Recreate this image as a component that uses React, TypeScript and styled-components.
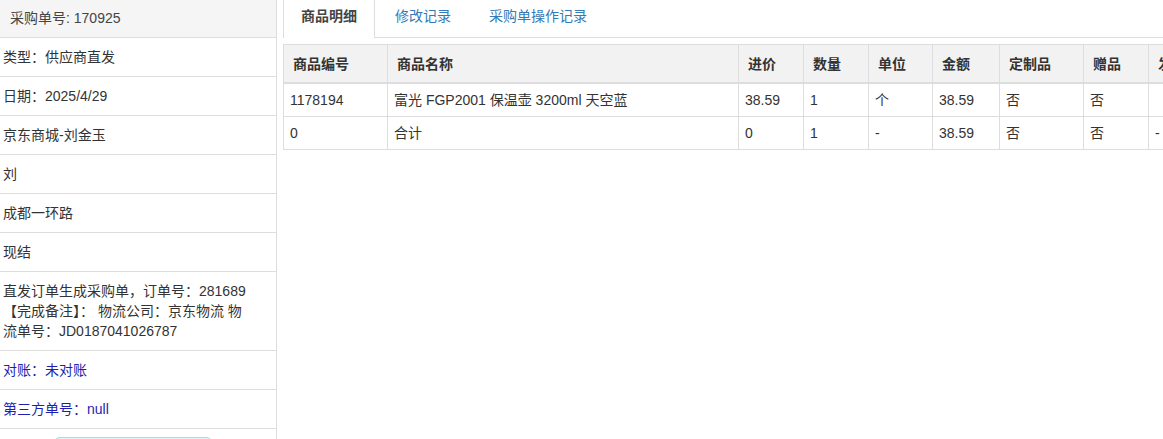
import React from 'react';
import styled, { createGlobalStyle } from 'styled-components';

const GlobalStyle = createGlobalStyle`
  html, body {
    margin: 0;
    padding: 0;
    background: #fff;
    overflow: hidden;
  }
  body {
    font-family: "Liberation Sans", "Noto Sans CJK SC", sans-serif;
    font-size: 14px;
    color: #333;
  }
`;

const Page = styled.div`
  display: flex;
  width: 1163px;
  height: 439px;
  overflow: hidden;
`;

const Side = styled.div`
  width: 276px;
  flex-shrink: 0;
  border-right: 1px solid #ddd;
  display: flex;
  flex-direction: column;
`;

const SideHead = styled.div`
  background: #f5f5f5;
  border-bottom: 1px solid #ddd;
  padding: 8px 10px 9px;
  line-height: 20px;
  color: #444;
`;

const SideRow = styled.div<{ $blue?: boolean }>`
  padding: 9px 28px 9px 3px;
  line-height: 20px;
  border-bottom: 1px solid #ddd;
  color: ${(p) => (p.$blue ? '#1f1fae' : '#333')};
`;

const SideFoot = styled.div`
  display: flex;
  justify-content: center;
  padding-top: 8px;
`;

const CyanButton = styled.button`
  width: 156px;
  height: 30px;
  margin-right: 10px;
  border: 1px solid #a9dfe4;
  border-radius: 4px;
  background: #dff4f6;
`;

const Main = styled.div`
  flex: 1;
  min-width: 0;
  padding-left: 6px;
  overflow: hidden;
`;

const Tabs = styled.div`
  display: flex;
  border-bottom: 1px solid #ddd;
  height: 37px;
`;

const Tab = styled.div<{ $active?: boolean }>`
  padding: 0 17px;
  margin-right: 2px;
  height: ${(p) => (p.$active ? '38px' : '37px')};
  line-height: 33px;
  border: 1px solid ${(p) => (p.$active ? '#ddd' : 'transparent')};
  border-top: none;
  border-bottom: none;
  background: #fff;
  color: ${(p) => (p.$active ? '#444' : '#337ab7')};
  font-weight: ${(p) => (p.$active ? 'bold' : 'normal')};
  white-space: nowrap;
`;

const Table = styled.table<{ $width: number }>`
  margin-top: 6px;
  border-collapse: collapse;
  table-layout: fixed;
  width: ${(p) => p.$width}px;
`;

const Th = styled.th`
  background: #f2f2f2;
  border: 1px solid #ddd;
  border-bottom: 2px solid #ddd;
  padding: 9px 9px 8px;
  line-height: 20px;
  text-align: left;
  font-weight: bold;
  color: #333;
  white-space: nowrap;
  overflow: hidden;
`;

const Td = styled.td`
  border: 1px solid #ddd;
  padding: 6px 6px;
  line-height: 20px;
  color: #333;
  white-space: nowrap;
  overflow: hidden;
`;

const columns = [
  { title: '商品编号', width: 104 },
  { title: '商品名称', width: 351 },
  { title: '进价', width: 65 },
  { title: '数量', width: 65 },
  { title: '单位', width: 64 },
  { title: '金额', width: 67 },
  { title: '定制品', width: 84 },
  { title: '赠品', width: 65 },
  { title: '发货', width: 70 },
];

const tableWidth = columns.reduce((s, c) => s + c.width, 0);

const rows = [
  ['1178194', '富光 FGP2001 保温壶 3200ml 天空蓝', '38.59', '1', '个', '38.59', '否', '否', ''],
  ['0', '合计', '0', '1', '-', '38.59', '否', '否', '-'],
];

const info = [
  { text: '类型：供应商直发' },
  { text: '日期：2025/4/29' },
  { text: '京东商城-刘金玉' },
  { text: '刘' },
  { text: '成都一环路' },
  { text: '现结' },
  {
    text: (
      <>
        直发订单生成采购单，订单号：281689
        <br />
        【完成备注】： 物流公司：京东物流 物流单号：JD0187041026787
      </>
    ),
  },
  { text: '对账：未对账', blue: true },
  { text: '第三方单号：null', blue: true },
];

export default function App() {
  return (
    <>
      <GlobalStyle />
      <Page>
        <Side>
          <SideHead>采购单号: 170925</SideHead>
          {info.map((r, i) => (
            <SideRow key={i} $blue={r.blue}>
              {r.text}
            </SideRow>
          ))}
          <SideFoot>
            <CyanButton />
          </SideFoot>
        </Side>
        <Main>
          <Tabs>
            <Tab $active>商品明细</Tab>
            <Tab>修改记录</Tab>
            <Tab>采购单操作记录</Tab>
          </Tabs>
          <Table $width={tableWidth}>
            <colgroup>
              {columns.map((c) => (
                <col key={c.title} style={{ width: c.width }} />
              ))}
            </colgroup>
            <thead>
              <tr>
                {columns.map((c) => (
                  <Th key={c.title}>{c.title}</Th>
                ))}
              </tr>
            </thead>
            <tbody>
              {rows.map((r, i) => (
                <tr key={i}>
                  {r.map((v, j) => (
                    <Td key={j}>{v}</Td>
                  ))}
                </tr>
              ))}
            </tbody>
          </Table>
        </Main>
      </Page>
    </>
  );
}
